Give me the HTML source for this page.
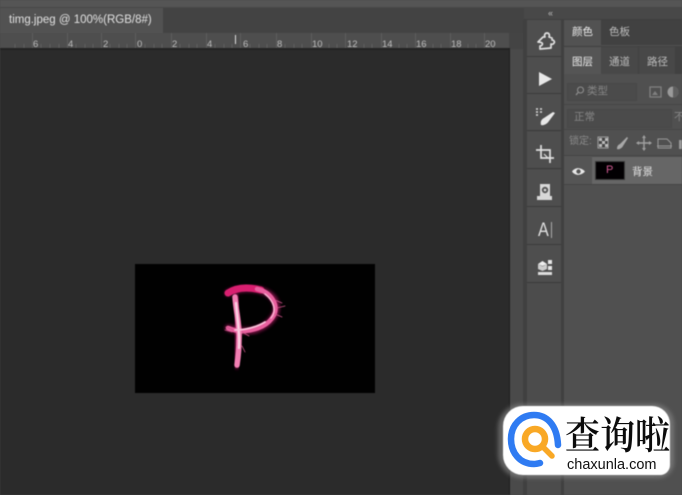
<!DOCTYPE html>
<html>
<head>
<meta charset="utf-8">
<style>
html,body{margin:0;padding:0;background:#4a4a4a}
#r{position:relative;width:682px;height:495px;overflow:hidden;background:#4a4a4a;font-family:"Liberation Sans","Noto Sans CJK SC",sans-serif}
#r div{position:absolute}
#m{left:0;top:0;width:682px;height:495px;filter:blur(.55px)}
.t{white-space:nowrap;line-height:1}
.rn{font-size:9.500px;color:#bdbdbd;top:40px}
.tk{top:33px;width:1px;height:15px;background:#5d5d5d}
.cn{font-size:10.500px}
.tb{left:527px;width:34px;background:#4e4e4e;border-bottom:1px solid #3b3b3b}
</style>
</head>
<body>
<div id="r">
<div id="m">
<div style="left:0;top:0;width:682px;height:7px;background:#555"></div>
<div style="left:0;top:7px;width:682px;height:1px;background:#484848"></div>
<div style="left:0;top:8px;width:524px;height:26px;background:#434343"></div>
<div style="left:0;top:8px;width:163px;height:25px;background:#525252"></div>
<div class="t" style="left:9px;top:15px;font-size:11.500px;color:#e2e2e2">timg.jpeg @ 100%(RGB/8#)</div>

<div style="left:0;top:33px;width:509px;height:16px;background:#4e4e4e"></div>
<div style="left:509px;top:33px;width:15px;height:16px;background:#444"></div>
<div class="tk" style="left:32px"></div><div class="tk" style="left:67px"></div><div class="tk" style="left:101px"></div><div class="tk" style="left:135px"></div><div class="tk" style="left:171px"></div><div class="tk" style="left:206px"></div><div class="tk" style="left:240px"></div><div class="tk" style="left:276px"></div><div class="tk" style="left:311px"></div><div class="tk" style="left:345px"></div><div class="tk" style="left:381px"></div><div class="tk" style="left:415px"></div><div class="tk" style="left:450px"></div><div class="tk" style="left:484px"></div>
<svg style="position:absolute;left:0;top:42px" width="509" height="7"><path d="M15 2v5M24 2v5M41 2v5M50 2v5M59 2v5M76 2v5M85 2v5M93 2v5M110 2v5M119 2v5M127 2v5M145 2v5M154 2v5M162 2v5M180 2v5M189 2v5M197 2v5M215 2v5M224 2v5M232 2v5M250 2v5M259 2v5M267 2v5M285 2v5M294 2v5M302 2v5M320 2v5M329 2v5M337 2v5M355 2v5M364 2v5M372 2v5M390 2v5M399 2v5M407 2v5M424 2v5M433 2v5M441 2v5M459 2v5M468 2v5M476 2v5M493 2v5" stroke="#606060" stroke-width="1"/></svg>
<div class="t rn" style="left:33px">6</div>
<div class="t rn" style="left:68px">4</div>
<div class="t rn" style="left:103px">2</div>
<div class="t rn" style="left:137px">0</div>
<div class="t rn" style="left:172px">2</div>
<div class="t rn" style="left:207px">4</div>
<div class="t rn" style="left:243px">6</div>
<div class="t rn" style="left:277px">8</div>
<div class="t rn" style="left:312px">10</div>
<div class="t rn" style="left:347px">12</div>
<div class="t rn" style="left:382px">14</div>
<div class="t rn" style="left:416px">16</div>
<div class="t rn" style="left:451px">18</div>
<div class="t rn" style="left:485px">20</div>
<div style="left:235px;top:35px;width:1px;height:9px;background:#e0e0e0"></div>

<div style="left:0;top:49px;width:510px;height:446px;background:#2b2b2b"></div>
<div style="left:0;top:48px;width:510px;height:2px;background:#222"></div>
<div style="left:509px;top:48px;width:1px;height:447px;background:#1f1f1f"></div>
<div style="left:510px;top:49px;width:14px;height:446px;background:#4a4a4a"></div>

<div style="left:135px;top:264px;width:240px;height:129px;background:#010101"></div>
<svg style="position:absolute;left:195px;top:270px" width="110" height="110" viewBox="0 0 110 110">
<defs><filter id="g"><feGaussianBlur stdDeviation="1.800"/></filter></defs>
<g fill="none" stroke-linecap="round">
<path d="M33 23C48 16 70 17 79 29C86 40 78 54 60 60C50 62 42 61 33 58" stroke="#c01e6c" stroke-width="6" filter="url(#g)" opacity=".75"/>
<path d="M40 27C44 48 44 72 42 95" stroke="#c01e6c" stroke-width="7" filter="url(#g)" opacity=".75"/>
<path d="M33 23C42 17 54 17 66 20" stroke="#d91f70" stroke-width="7"/>
<path d="M62 19C76 22 84 35 79 45C74 55 62 60 50 61C44 62 38 60 33 58" stroke="#e9609f" stroke-width="4.500"/>
<path d="M40 27C41 42 45 55 44 70C44 80 43 88 42 95" stroke="#f27fb3" stroke-width="5.500"/>
<path d="M41 33C42 48 45 60 44 78" stroke="#fbd4e4" stroke-width="2.200"/>
<path d="M40 60C50 60 62 57 70 52" stroke="#f9c2da" stroke-width="1.800"/>
<path d="M70 24C79 31 82 41 76 48" stroke="#f7b0ce" stroke-width="1.600"/>
<path d="M80 30L87 33M82 38L90 36M80 44L87 47M31 57L38 60M30 60L37 62M47 76L50 82M47 62L54 66" stroke="#c95488" stroke-width=".8"/>
</g></svg>

<div style="left:524px;top:8px;width:158px;height:487px;background:#484848"></div>
<div class="t" style="left:548px;top:9px;font-size:9px;color:#bbb;letter-spacing:-1px">‹‹</div>
<div style="left:524px;top:19px;width:158px;height:1px;background:#3f3f3f"></div>
<div style="left:523px;top:20px;width:4px;height:475px;background:#404040"></div>
<div style="left:527px;top:20px;width:34px;height:475px;background:#4c4c4c"></div>
<div style="left:561px;top:20px;width:3px;height:475px;background:#404040"></div>

<div class="tb" style="top:20px;height:36px"></div>
<div class="tb" style="top:57px;height:36px"></div>
<div class="tb" style="top:94px;height:36px"></div>
<div class="tb" style="top:132px;height:36px"></div>
<div class="tb" style="top:170px;height:36px"></div>
<div class="tb" style="top:207px;height:37px"></div>
<div class="tb" style="top:245px;height:37px"></div>

<svg style="position:absolute;left:527px;top:20px" width="36" height="265" viewBox="0 0 36 265">
<path d="M16 17L18 17C17 15 18 13 20 13C22 13 23 15 22 17L25 18L25 20C27 20 28 22 27 23C26 25 24 24 24 24L24 28L13 29L13 26C15 26 16 24 15 23C14 22 12 22 11 22Z" fill="none" stroke="#e0e0e0" stroke-width="1.700" stroke-linejoin="round"/>
<path d="M12 52L25 59L12 66Z" fill="#e8e8e8"/>
<path d="M9 89h2M9 92h2M9 95h2M13 89h2M13 92h2" stroke="#ddd" stroke-width="1.500"/>
<path d="M14 105C13 101 15 99 17 98L26 92L28 93L22 101C21 103 17 106 14 105Z" fill="#e8e8e8"/>
<path d="M9 130H23V143M14 125V138H27" fill="none" stroke="#e0e0e0" stroke-width="1.700"/>
<path d="M17 134l4 4" stroke="#ddd" stroke-width="1.200"/>
<path d="M13 176L13 164H23L23 176H25L25 180H10L10 176Z" fill="#d8d8d8"/>
<circle cx="18" cy="170" r="3.200" fill="#555"/><circle cx="18" cy="170" r="1.300" fill="#ddd"/>
<path d="M24.500 202V218" stroke="#aaa" stroke-width="1"/>
<path d="M11 244L15.500 246.500V251L11 249ZM20 244L15.500 246.500V251L20 249Z" fill="#ccc"/><path d="M11 244L15.500 241L20 244L15.500 246Z" fill="#eee"/>
<path d="M21 240h4v4h-4ZM21 246h4v4h-4Z" fill="#e6e6e6"/><path d="M11 252h14v3H11Z" fill="#ddd"/>
</svg>
<div class="t" style="left:538px;top:221px;font-size:19px;color:#e0e0e0;transform:scaleX(.85);transform-origin:0 0">A</div>

<div style="left:564px;top:20px;width:118px;height:475px;background:#505050"></div>
<div style="left:564px;top:20px;width:118px;height:25px;background:#414141"></div>
<div style="left:564px;top:20px;width:37px;height:25px;background:#525252"></div>
<div style="left:564px;top:46px;width:118px;height:28px;background:#414141"></div>
<div style="left:564px;top:47px;width:37px;height:27px;background:#555"></div>
<div style="left:601px;top:47px;width:37px;height:27px;background:#484848"></div>
<div style="left:639px;top:47px;width:36px;height:27px;background:#484848"></div>
<div class="t cn" style="left:572px;top:27px;color:#eee">颜色</div>
<div class="t cn" style="left:609px;top:27px;color:#bdbdbd">色板</div>
<div class="t cn" style="left:572px;top:57px;color:#eee">图层</div>
<div class="t cn" style="left:609px;top:57px;color:#bdbdbd">通道</div>
<div class="t cn" style="left:647px;top:57px;color:#bdbdbd">路径</div>

<div style="left:567px;top:83px;width:68px;height:16px;background:#4b4b4b;border:1px solid #484848"></div>
<div class="t" style="left:587px;top:86px;font-size:10.500px;color:#868686">类型</div>
<svg style="position:absolute;left:575px;top:85px" width="10" height="12"><circle cx="5.500" cy="5" r="3" fill="none" stroke="#8e8e8e" stroke-width="1.100"/><path d="M3 7.500L1 10" stroke="#8e8e8e" stroke-width="1.300"/></svg>
<svg style="position:absolute;left:648px;top:84px" width="34" height="16"><rect x="2" y="3" width="11" height="10" fill="none" stroke="#808080" stroke-width="1.300"/><path d="M4 11l3-4 3 4z" fill="#808080"/><circle cx="25" cy="8" r="5.500" fill="#9a9a9a"/><path d="M25 2.500a5.500 5.500 0 0 1 0 11z" fill="#606060"/></svg>
<div style="left:564px;top:104px;width:118px;height:1px;background:#454545"></div>
<div style="left:567px;top:109px;width:103px;height:17px;background:#4b4b4b;border:1px solid #484848"></div>
<div class="t" style="left:574px;top:112px;font-size:10.500px;color:#868686">正常</div>
<div class="t" style="left:674px;top:112px;font-size:10.500px;color:#868686">不</div>
<div style="left:564px;top:129px;width:118px;height:1px;background:#454545"></div>
<div class="t" style="left:569px;top:137px;font-size:10px;color:#8a8a8a">锁定:</div>
<svg style="position:absolute;left:597px;top:135px" width="85" height="16">
<rect x="1" y="2" width="10" height="11" fill="#444" stroke="#a0a0a0"/><path d="M2 3h3v3H2zM8 3h3v3H8zM5 6h3v3H5zM2 9h3v3H2zM8 9h3v3H8z" fill="#bbb"/>
<path d="M20 14C20 11 21 10 23 9L30 2L31 3L26 11C25 13 22 15 20 14Z" fill="#a8a8a8"/>
<path d="M47 2V14M41 8H53" stroke="#a0a0a0" stroke-width="1.400"/><path d="M47 0l2 3h-4zM47 16l2-3h-4zM39 8l3-2v4zM55 8l-3-2v4z" fill="#a0a0a0"/>
<path d="M61 4H70L74 8V13H61ZM60 11h15" fill="none" stroke="#999" stroke-width="1"/>
<rect x="82" y="5" width="3" height="9" fill="#999"/>
</svg>

<div style="left:564px;top:155px;width:118px;height:1px;background:#454545"></div>
<div style="left:564px;top:156px;width:28px;height:28px;background:#555"></div>
<div style="left:592px;top:157px;width:90px;height:27px;background:#666"></div>
<div style="left:564px;top:184px;width:118px;height:1px;background:#454545"></div>
<svg style="position:absolute;left:571px;top:166px" width="15" height="11"><path d="M1 5.500C4 1 10 1 14 5.500C10 10 4 10 1 5.500Z" fill="#e8e8e8"/><circle cx="7.500" cy="5.500" r="2.200" fill="#555"/></svg>
<div style="left:595px;top:161px;width:30px;height:19px;background:#020002;border:1px solid #3c3c3c;box-sizing:border-box"></div>
<div class="t" style="left:606px;top:165px;font-size:11px;color:#d05a92">P</div>
<div class="t cn" style="left:632px;top:167px;color:#e4e4e4">背景</div>
</div>

<div style="left:498px;top:404px;width:176px;height:74px;background:#929292;border-radius:24px 20px 16px 24px;filter:blur(2px);opacity:.55"></div>
<div style="left:503px;top:406px;width:167px;height:69px;background:#fff;border-radius:20px 18px 10px 20px;filter:blur(.4px)"></div>
<svg style="position:absolute;left:505px;top:408px" width="60" height="64" viewBox="0 0 60 64">
<path d="M35 55C33 55.500 31 56 29 56C15 56 6 45 6 31C6 17 16 7 29 7C42 7 52 17 53 37" fill="none" stroke="#2f7bf2" stroke-width="6.500" stroke-linecap="round"/>
<circle cx="30" cy="31" r="10" fill="none" stroke="#f9a825" stroke-width="6.500"/>
<path d="M38 39L47 48" stroke="#f9a825" stroke-width="5.500" stroke-linecap="round"/>
</svg>
<div class="t" style="left:565px;top:417px;font-size:35px;color:#0c0c0c;font-family:'Liberation Serif','Noto Serif CJK SC',serif;font-weight:600;transform-origin:0 0;transform:scaleY(1.100);filter:blur(.3px)">查询啦</div>
<div class="t" style="left:567px;top:458px;font-size:14.500px;color:#111;filter:blur(.2px)">chaxunla.com</div>
</div>
</body>
</html>
